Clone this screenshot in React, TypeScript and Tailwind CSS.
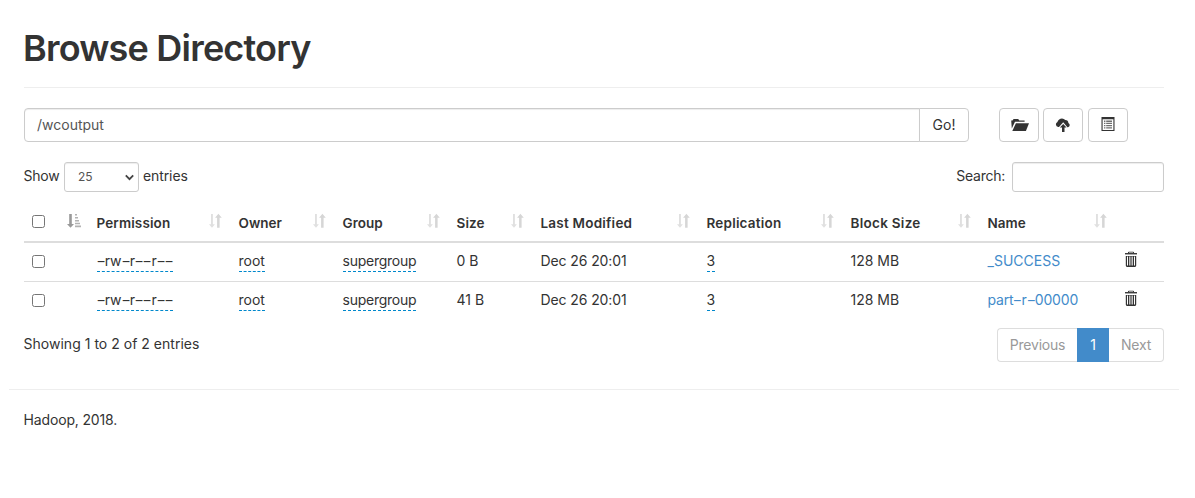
import React from "react";

const columns = [
  { label: "Permission", width: 142, track: "tracking-[0.12px]" },
  { label: "Owner", width: 104, track: "" },
  { label: "Group", width: 114, track: "tracking-[0.05px]" },
  { label: "Size", width: 84, track: "tracking-[0.1px]" },
  { label: "Last Modified", width: 166, track: "tracking-[0.22px]" },
  { label: "Replication", width: 144, track: "tracking-[0.2px]" },
  { label: "Block Size", width: 137, track: "tracking-[0.28px]" },
  { label: "Name", width: 136, track: "tracking-[0.05px]" },
];

const rows = [
  { size: "0 B", name: "_SUCCESS" },
  { size: "41 B", name: "part-r-00000" },
];

function SortIcon() {
  return (
    <svg width="14" height="16" viewBox="0 0 14 16" fill="#d6d6d6" className="-ml-[2px] mr-px shrink-0">
      <path d="M3 1h1.9v10.2h2L4 14.7 1 11.2h2z" opacity="0.75" />
      <path d="M9.1 14.7h2.5V4.8h2.2L10.4.8 7.1 4.8h2z" />
    </svg>
  );
}

function SortedIcon() {
  return (
    <svg width="14" height="16" viewBox="0 0 14 16" fill="#999" className="mr-px shrink-0">
      <path d="M2.2 1h2.6v10H7L3.5 14.7 0 11h2.2z" />
      <path d="M8 1h2v1.6H8zM8 4h3v1.6H8zM8 7h4v1.6H8zM8 9.8h5v1.5H8zM8 12.6h6v1.6H8z" opacity="0.75" />
    </svg>
  );
}

function FolderOpen() {
  return (
    <svg width="18" height="14" viewBox="0 0 18 14" fill="#333" className="ml-[2px]">
      <path d="M.2 2.4h1.3L2.6 1h4.6l1.1 1.4h5.3v1.4H4L.8 10.4z" />
      <path d="M4.9 5.2H18L14.9 13H1.3z" />
    </svg>
  );
}

function CloudUpload() {
  return (
    <svg width="16" height="16" viewBox="0 0 16 16" fill="#333">
      <path d="M3.2 10A2.7 2.7 0 0 1 2.4 4.9Q3.7 1.4 7 1.4 9 1.4 10.3 2.9a3.2 3.2 0 0 1 3.1 3A2.3 2.3 0 0 1 13 10.2H12.4L8.2 5.3 4 10z" />
      <path d="m8.2 7 3.3 3.6H9.5V15H7v-4.4H4.9z" />
    </svg>
  );
}

function ListAlt() {
  return (
    <svg width="14" height="14" viewBox="0 0 14 14" fill="#333">
      <path fillRule="evenodd" d="M.5 0h13v14H.5zM1.6 2.2v10.7h10.8V2.2z" />
      <path d="M3 3.6h1.4v1.3H3zM5.2 3.6H11v1.3H5.2zM3 5.8h1.4v1.3H3zM5.2 5.8H11v1.3H5.2zM3 8h1.4v1.3H3zM5.2 8H11v1.3H5.2zM3 10.2h1.4v1.3H3zM5.2 10.2H11v1.3H5.2z" opacity="0.7" />
    </svg>
  );
}

function Trash() {
  return (
    <svg width="14" height="17" viewBox="0 0 14 17" fill="#333">
      <path fillRule="evenodd" d="M4 2V1.4Q4 .7 4.8.7h4.4q.8 0 .8.7V2h3v2H1V2zm1 0h4v-.4H5z" />
      <path d="M1 2.9h12V4H1z" fill="#aaa" />
      <path fillRule="evenodd" d="M1.8 5h10.4v9.5q0 1.4-1.2 1.4H3q-1.2 0-1.2-1.4zM3 5.6v8.8h1V5.6zm2.3 0v8.8h1.1V5.6zm2.3 0v8.8h1.1V5.6zm2.4 0v8.8h1V5.6z" />
    </svg>
  );
}

function Check() {
  return <input type="checkbox" className="block h-[13px] w-[13px]" />;
}

function Dashed({ text }: { text: string }) {
  return (
    <>
      {text.split("").map((c, i) =>
        c === "-" ? (
          <span key={i} className="inline-block w-[8.2px] scale-x-150 text-center">-</span>
        ) : (
          <React.Fragment key={i}>{c}</React.Fragment>
        )
      )}
    </>
  );
}

function Editable({ children, className = "" }: { children: React.ReactNode; className?: string }) {
  return (
    <td className="pl-[7.5px] pt-2 align-top">
      <span className={`block h-[21px] w-fit whitespace-nowrap border-b border-dashed border-[#0088cc] ${className}`}>{children}</span>
    </td>
  );
}

const cell = "pl-[7.5px] pt-2 align-top";
const iconButton = "flex h-[34px] w-10 items-center justify-center rounded border border-[#ccc] bg-white";

export default function App() {
  return (
    <div className="h-[498px] overflow-hidden bg-white px-[9px] font-['Inter','Liberation_Sans',sans-serif] text-[14px] leading-5 text-[#333]">
      <div className="ml-[15px] w-[1140px]">
        <header className="h-[88px] border-b border-[#eee] pt-[28px]">
          <h1 className="-ml-px text-[36px] font-semibold leading-[40px] tracking-[-0.8px]">Browse Directory</h1>
        </header>

        <div className="mt-5 flex">
          <input
            defaultValue="/wcoutput"
            className="h-[34px] w-[896px] rounded-l border border-[#ccc] px-3 pb-px text-[#555] shadow-[inset_0_1px_1px_rgba(0,0,0,0.075)] outline-none"
          />
          <button className="-ml-px h-[34px] w-[50px] rounded-r border border-[#ccc] bg-white">Go!</button>
          <div className="ml-[30px] flex">
            <button className={iconButton} aria-label="Create directory"><FolderOpen /></button>
            <button className={`${iconButton} ml-1`} aria-label="Upload"><CloudUpload /></button>
            <button className={`${iconButton} ml-[5px] pb-[2px]`} aria-label="Cut and paste"><ListAlt /></button>
          </div>
        </div>

        <div className="mt-5 flex h-[30px] justify-between">
          <label className="flex">
            <span className="-ml-[0.5px] w-[40.5px] pt-1 tracking-[-0.2px]">Show</span>
            <span className="flex h-[30px] w-[75px] items-center justify-between rounded-[3px] border border-[#ccc] pl-[13px] pr-[4px] text-[12px] text-[#555] shadow-[inset_0_1px_1px_rgba(0,0,0,0.075)]">
              25
              <svg width="9" height="7" viewBox="0 0 9 7" fill="none" stroke="#444" strokeWidth="1.8"><path d="m.8 1.3 3.7 3.8 3.7-3.8" /></svg>
            </span>
            <span className="ml-1 pt-1 tracking-[-0.1px]">entries</span>
          </label>
          <label className="flex">
            <span className="pt-1 tracking-[-0.25px]">Search:</span>
            <input className="ml-[7px] h-[30px] w-[152px] rounded-[3px] border border-[#ccc] px-2 shadow-[inset_0_1px_1px_rgba(0,0,0,0.075)]" />
          </label>
        </div>

        <table className="mt-[13px] w-[1140px] table-fixed border-collapse">
          <colgroup>
            <col className="w-[30px]" />
            <col className="w-[35px]" />
            {columns.map((c) => <col key={c.label} style={{ width: c.width }} />)}
            <col className="w-[48px]" />
          </colgroup>
          <thead>
            <tr className="h-[37px] border-b-2 border-[#ddd]">
              <th className="px-2 pt-[10px] align-top"><Check /></th>
              <th className="pt-2 align-top"><div className="flex justify-end pr-[7px]"><SortedIcon /></div></th>
              {columns.map((c) => (
                <th key={c.label} className="pl-[7.5px] pr-2 pt-2 align-top font-semibold">
                  <div className="flex justify-between">
                    <span className={`whitespace-nowrap text-[13.5px] ${c.track}`}>{c.label}</span>
                    <SortIcon />
                  </div>
                </th>
              ))}
              <th />
            </tr>
          </thead>
          <tbody>
            {rows.map((r, i) => (
              <tr key={r.name} className={i === 0 ? "h-[39px] border-b border-[#ddd]" : "h-[39px]"}>
                <td className="px-2 pt-3 align-top"><Check /></td>
                <td />
                <Editable><Dashed text="-rw-r--r--" /></Editable>
                <Editable>root</Editable>
                <Editable className="tracking-[-0.25px]">supergroup</Editable>
                <td className={cell}>{r.size}</td>
                <td className={`${cell} tracking-[-0.1px]`}>Dec 26 20:01</td>
                <Editable>3</Editable>
                <td className={cell}>128 MB</td>
                <td className={`${cell} text-[#428bca] ${i === 1 ? "tracking-[-0.2px]" : ""}`}><Dashed text={r.name} /></td>
                <td className="px-2 pt-2 align-top"><Trash /></td>
              </tr>
            ))}
          </tbody>
        </table>

        <div className="mt-2 flex h-[34px] justify-between">
          <span className="-ml-[0.5px] pt-[6px] tracking-[0.02px]">Showing 1 to 2 of 2 entries</span>
          <nav className="flex rounded text-[#999]">
            <span className="flex w-20 items-center justify-center rounded-l border border-r-0 border-[#ddd] tracking-[-0.2px]">Previous</span>
            <span className="flex w-8 items-center justify-center bg-[#428bca] text-white">1</span>
            <span className="flex w-[55px] items-center justify-center rounded-r border border-l-0 border-[#ddd] tracking-[-0.2px]">Next</span>
          </nav>
        </div>
      </div>
      <hr className="mt-[27px] w-[1170px] border-[#eee]" />
      <p className="ml-[14.5px] mt-5 tracking-[-0.15px]">Hadoop, 2018.</p>
    </div>
  );
}
